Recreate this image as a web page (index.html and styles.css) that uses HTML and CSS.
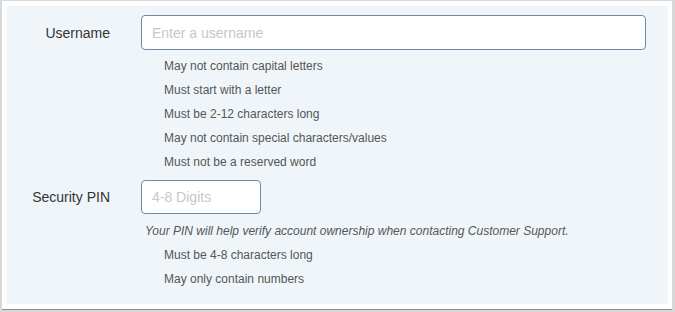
FILE: index.html
```html
<!DOCTYPE html>
<html>
<head>
    <title>Account Setup</title>
    <link rel="stylesheet" href="styles.css">
</head>
<body>
    <div class="frame">
        <div class="panel">
            <div class="field-row">
                <label class="field-label" for="username">Username</label>
                <input class="field-input wide" id="username" type="text" placeholder="Enter a username">
            </div>
            <ul class="rules">
                <li>May not contain capital letters</li>
                <li>Must start with a letter</li>
                <li>Must be 2-12 characters long</li>
                <li>May not contain special characters/values</li>
                <li>Must not be a reserved word</li>
            </ul>

            <div class="field-row pin-row">
                <label class="field-label" for="pin">Security PIN</label>
                <input class="field-input narrow" id="pin" type="text" placeholder="4-8 Digits">
            </div>
            <p class="note">Your PIN will help verify account ownership when contacting Customer Support.</p>
            <ul class="rules">
                <li>Must be 4-8 characters long</li>
                <li>May only contain numbers</li>
            </ul>
        </div>
    </div>
</body>
</html>
```

FILE: styles.css
```css
html, body {
    margin: 0;
    padding: 0;
    height: 312px;
    overflow: hidden;
}

body {
    font-family: "Liberation Sans", Arial, sans-serif;
    background-color: #d8d8d8;
}

.frame {
    margin: 1px 3px 0 2px;
    height: 303px;
    padding: 5px 4px 0 5px;
    background-color: #fff;
    border-bottom: 1px solid #8c8c8c;
}

.panel {
    background-color: #f0f5fa;
    height: 289px;
    padding-top: 9px;
    padding-right: 22px;
}

.field-row {
    display: flex;
    align-items: center;
}

.field-label {
    width: 103px;
    padding-right: 31px;
    text-align: right;
    font-size: 14px;
    color: #333;
    flex-shrink: 0;
}

.field-input {
    box-sizing: border-box;
    height: 35px;
    padding: 0 10px;
    border: 1px solid #6f89a8;
    border-radius: 4px;
    background-color: #fff;
    font-family: "Liberation Sans", Arial, sans-serif;
    font-size: 14px;
    color: #333;
    outline: none;
}

.field-input::placeholder {
    color: #c4c9cc;
}

.field-input.wide {
    flex: 1;
}

.field-input.narrow {
    width: 120px;
    height: 34px;
}

.rules {
    list-style: none;
    margin: 4px 0 0 0;
    padding: 0 0 0 157px;
    font-size: 12px;
    line-height: 24px;
    color: #555;
}

.pin-row {
    margin-top: 6px;
}

.note {
    margin: 5px 0 0 138px;
    font-size: 12px;
    line-height: 24px;
    font-style: italic;
    color: #555;
}

.note + .rules {
    margin-top: 0;
}
```
